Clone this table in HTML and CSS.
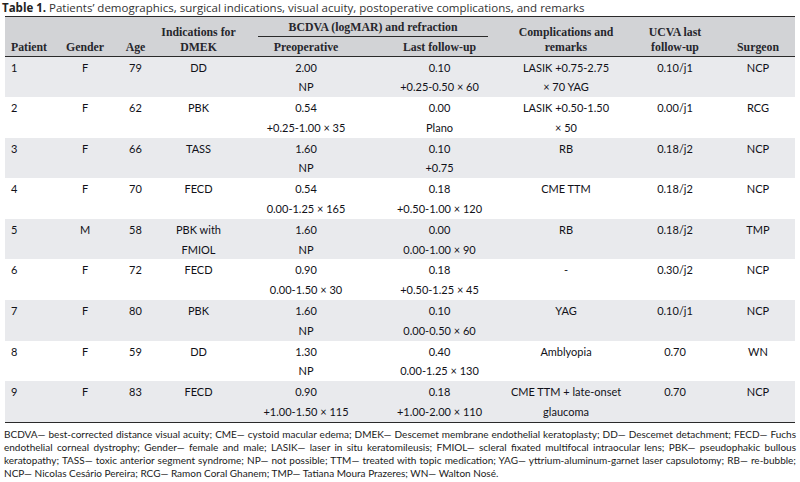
FILE: index.html
```html
<!DOCTYPE html>
<html lang="en">
<head>
<meta charset="utf-8">
<title>Table 1</title>
<link rel="stylesheet" href="styles.css">
</head>
<body>
<div class="page">
  <p class="caption"><b>Table 1.</b> Patients’ demographics, surgical indications, visual acuity, postoperative complications, and remarks</p>
  <table class="data">
    <colgroup>
      <col class="c-pat"><col class="c-gen"><col class="c-age"><col class="c-ind"><col class="c-pre"><col class="c-last"><col class="c-comp"><col class="c-ucva"><col class="c-surg">
    </colgroup>
    <thead>
      <tr class="h1">
        <th rowspan="2" class="left">Patient</th>
        <th rowspan="2">Gender</th>
        <th rowspan="2">Age</th>
        <th rowspan="2">Indications for<br>DMEK</th>
        <th colspan="2" class="group"><span class="group-label">BCDVA (logMAR) and refraction</span></th>
        <th rowspan="2">Complications and<br>remarks</th>
        <th rowspan="2">UCVA last<br>follow-up</th>
        <th rowspan="2">Surgeon</th>
      </tr>
      <tr class="h2">
        <th>Preoperative</th>
        <th>Last follow-up</th>
      </tr>
    </thead>
    <tbody>
      <tr class="shade">
        <td class="left">1</td><td>F</td><td>79</td><td>DD</td>
        <td>2.00<br>NP</td><td>0.10<br>+0.25-0.50 × 60</td>
        <td>LASIK +0.75-2.75<br>× 70 YAG</td><td>0.10/j1</td><td>NCP</td>
      </tr>
      <tr>
        <td class="left">2</td><td>F</td><td>62</td><td>PBK</td>
        <td>0.54<br>+0.25-1.00 × 35</td><td>0.00<br>Plano</td>
        <td>LASIK +0.50-1.50<br>× 50</td><td>0.00/j1</td><td>RCG</td>
      </tr>
      <tr class="shade">
        <td class="left">3</td><td>F</td><td>66</td><td>TASS</td>
        <td>1.60<br>NP</td><td>0.10<br>+0.75</td>
        <td>RB</td><td>0.18/j2</td><td>NCP</td>
      </tr>
      <tr>
        <td class="left">4</td><td>F</td><td>70</td><td>FECD</td>
        <td>0.54<br>0.00-1.25 × 165</td><td>0.18<br>+0.50-1.00 × 120</td>
        <td>CME TTM</td><td>0.18/j2</td><td>NCP</td>
      </tr>
      <tr class="shade">
        <td class="left">5</td><td>M</td><td>58</td><td>PBK with<br>FMIOL</td>
        <td>1.60<br>NP</td><td>0.00<br>0.00-1.00 × 90</td>
        <td>RB</td><td>0.18/j2</td><td>TMP</td>
      </tr>
      <tr>
        <td class="left">6</td><td>F</td><td>72</td><td>FECD</td>
        <td>0.90<br>0.00-1.50 × 30</td><td>0.18<br>+0.50-1.25 × 45</td>
        <td>-</td><td>0.30/j2</td><td>NCP</td>
      </tr>
      <tr class="shade">
        <td class="left">7</td><td>F</td><td>80</td><td>PBK</td>
        <td>1.60<br>NP</td><td>0.10<br>0.00-0.50 × 60</td>
        <td>YAG</td><td>0.10/j1</td><td>NCP</td>
      </tr>
      <tr>
        <td class="left">8</td><td>F</td><td>59</td><td>DD</td>
        <td>1.30<br>NP</td><td>0.40<br>0.00-1.25 × 130</td>
        <td>Amblyopia</td><td>0.70</td><td>WN</td>
      </tr>
      <tr class="shade">
        <td class="left">9</td><td>F</td><td>83</td><td>FECD</td>
        <td>0.90<br>+1.00-1.50 × 115</td><td>0.18<br>+1.00-2.00 × 110</td>
        <td>CME TTM + late-onset<br>glaucoma</td><td>0.70</td><td>NCP</td>
      </tr>
    </tbody>
  </table>
  <div class="notes">
    <span class="line">BCDVA— best-corrected distance visual acuity; CME— cystoid macular edema; DMEK— Descemet membrane endothelial keratoplasty; DD— Descemet detachment; FECD— Fuchs</span>
    <span class="line">endothelial corneal dystrophy; Gender— female and male; LASIK— laser in situ keratomileusis; FMIOL— scleral fixated multifocal intraocular lens; PBK— pseudophakic bullous</span>
    <span class="line">keratopathy; TASS— toxic anterior segment syndrome; NP— not possible; TTM— treated with topic medication; YAG— yttrium-aluminum-garnet laser capsulotomy; RB— re-bubble;</span>
    <span class="line last">NCP— Nicolas Cesário Pereira; RCG— Ramon Coral Ghanem; TMP— Tatiana Moura Prazeres; WN— Walton Nosé.</span>
  </div>
</div>
</body>
</html>
```

FILE: styles.css
```css
html, body {
  margin: 0;
  padding: 0;
  background: #ffffff;
}

.page {
  width: 800px;
  height: 482px;
  overflow: hidden;
  color: #1c1c22;
}

.caption {
  margin: 0;
  padding-left: 2px;
  height: 16px;
  line-height: 15px;
  font-family: "Open Sans", "Liberation Sans", sans-serif;
  font-size: 11.5px;
  color: #333;
  white-space: nowrap;
}

.caption b {
  font-weight: 700;
  color: #222;
}

.data {
  margin-left: 5px;
  width: 790px;
  table-layout: fixed;
  border-collapse: collapse;
  border-spacing: 0;
}

.c-pat { width: 55px; }
.c-gen { width: 50px; }
.c-age { width: 51px; }
.c-ind { width: 75px; }
.c-pre { width: 140px; }
.c-last { width: 127px; }
.c-comp { width: 126px; }
.c-ucva { width: 92px; }
.c-surg { width: 74px; }

.data thead {
  background: #d2d3d6;
  border-top: 1px solid #2a2a2a;
  border-bottom: 1px solid #2a2a2a;
}

.data th {
  font-family: "Liberation Serif", "Times New Roman", serif;
  font-weight: 700;
  font-size: 11.8px;
  line-height: 15px;
  color: #26262c;
  text-align: center;
  vertical-align: bottom;
  padding: 0 0 1px 0;
  white-space: nowrap;
}

.data .h1 { height: 20px; }
.data .h2 { height: 19px; }

.data th.group {
  vertical-align: top;
  padding: 3px 0 0 0;
}

.group-label {
  display: block;
  margin: 0 15px 0 22px;
  padding-bottom: 1px;
  border-bottom: 1px solid #2a2a2a;
}

.data td {
  font-family: Lato, "Open Sans", sans-serif;
  font-size: 11px;
  line-height: 19.8px;
  height: 39.6px;
  padding: 1px 0 0 0;
  text-align: center;
  vertical-align: top;
  white-space: nowrap;
  color: #111118;
}

.data .left {
  text-align: left;
  padding-left: 6px;
}

.data tbody tr.shade {
  background: #e9eaed;
}

.data tbody {
  border-bottom: 1px solid #2a2a2a;
}

.notes {
  margin: 5px 4px 0 4px;
  font-family: Lato, "Open Sans", sans-serif;
  font-size: 10px;
  line-height: 13px;
  color: #1a1a1a;
}

.notes .line {
  display: block;
  text-align: justify;
  text-align-last: justify;
}

.notes .line.last {
  text-align: left;
  text-align-last: left;
}
```
